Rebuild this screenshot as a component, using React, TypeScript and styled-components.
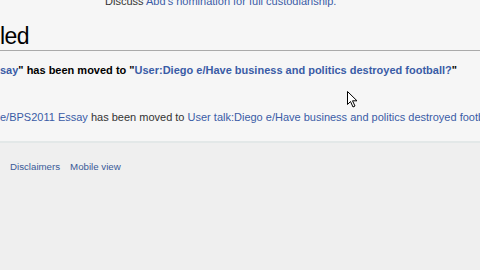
import React from 'react';
import styled, { createGlobalStyle } from 'styled-components';

const GlobalStyle = createGlobalStyle`
  html, body {
    margin: 0;
    padding: 0;
    width: 480px;
    height: 270px;
    overflow: hidden;
    background: #eeeeee;
    font-family: "Liberation Sans", Arial, sans-serif;
  }
`;

const Page = styled.div`
  position: relative;
  width: 480px;
  height: 270px;
  overflow: hidden;
  display: flex;
  flex-direction: column;
`;

const Content = styled.div`
  background: #f6f6f6;
  height: 141px;
  border-bottom: 2px solid #e3e8e8;
  overflow: hidden;
  white-space: nowrap;
`;

const DiscussLine = styled.div`
  margin-top: -5px;
  padding-left: 105px;
  font-size: 11px;
  line-height: 13px;
  color: #333;
`;

const Heading = styled.h2`
  margin: 14px 0 0 0;
  font-weight: normal;
  font-size: 23px;
  letter-spacing: -0.6px;
  line-height: 28px;
  color: #000;
  border-bottom: 1px solid #aaaaaa;
`;

const MovedLine = styled.p<{ bold?: boolean }>`
  margin: 0;
  font-size: 11px;
  font-weight: ${p => (p.bold ? 'bold' : 'normal')};
  color: ${p => (p.bold ? '#000' : '#333')};
  line-height: 14px;
`;

const FirstMoved = styled(MovedLine)`
  margin-top: 12px;
`;

const SecondMoved = styled(MovedLine)`
  margin-top: 33px;
`;

const Link = styled.a`
  color: #3a5ca6;
  text-decoration: none;
`;

const Footer = styled.div`
  flex: 1;
  background: #efefef;
  padding: 18px 0 0 10px;
  display: flex;
  gap: 10px;
  font-size: 9.7px;
  line-height: 12px;
`;

const FooterLink = styled.a`
  color: #3a5a98;
  text-decoration: none;
`;

const Cursor = styled.svg`
  position: absolute;
  left: 347px;
  top: 91px;
`;

export default function App() {
  return (
    <>
      <GlobalStyle />
      <Page>
        <Content>
          <DiscussLine>
            Discuss <Link href="#">Abd's nomination for full custodianship.</Link>
          </DiscussLine>
          <Heading>led</Heading>
          <FirstMoved bold>
            <Link href="#">say</Link>" has been moved to "
            <Link href="#">User:Diego e/Have business and politics destroyed football?</Link>"
          </FirstMoved>
          <SecondMoved>
            <Link href="#">e/BPS2011 Essay</Link> has been moved to{' '}
            <Link href="#">User talk:Diego e/Have business and politics destroyed football?</Link>
          </SecondMoved>
        </Content>
        <Footer>
          <FooterLink href="#">Disclaimers</FooterLink>
          <FooterLink href="#">Mobile view</FooterLink>
        </Footer>
        <Cursor width="12" height="17" viewBox="0 0 12 17">
          <path d="M0.5 0.5 L0.5 13.5 L3.5 10.5 L6 16 L8 15 L5.5 9.8 L10 9.8 Z" fill="#fff" stroke="#000" strokeWidth="1" strokeLinejoin="round" />
        </Cursor>
      </Page>
    </>
  );
}
